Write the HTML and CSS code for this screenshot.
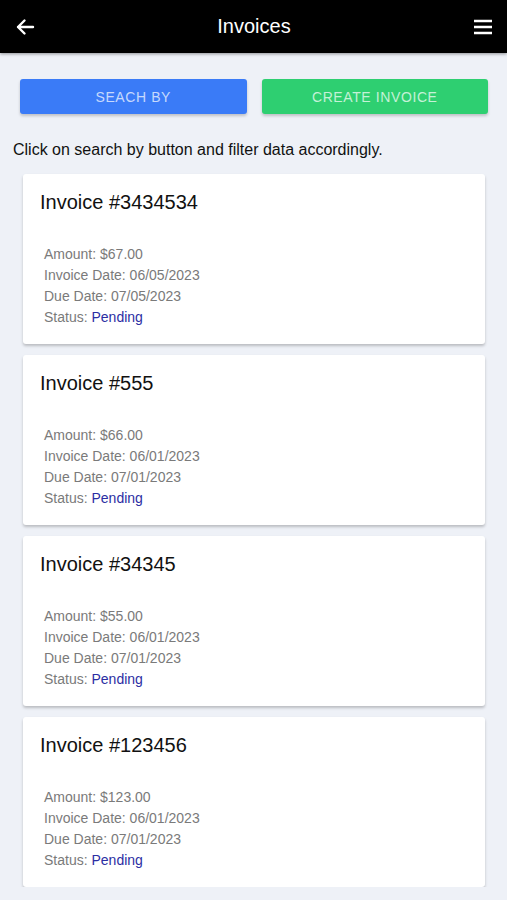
FILE: index.html
```html
<!DOCTYPE html>
<html lang="en">
<head>
<meta charset="utf-8">
<title>Invoices</title>
<link rel="stylesheet" href="styles.css">
</head>
<body>
<header class="topbar">
  <button class="icon-btn" aria-label="Back">
    <svg width="20" height="20" viewBox="0 0 20 20"><path d="M18 10H3M9.5 3.5L3 10l6.5 6.5" fill="none" stroke="#fff" stroke-width="2.4" stroke-linecap="round" stroke-linejoin="round"/></svg>
  </button>
  <h1 class="title">Invoices</h1>
  <button class="icon-btn" aria-label="Menu">
    <svg width="20" height="20" viewBox="0 0 20 20"><path d="M1 4h18M1 10h18M1 16h18" stroke="#fff" stroke-width="2.4"/></svg>
  </button>
</header>
<main class="content">
  <div class="actions">
    <button class="btn btn-blue">SEACH BY</button>
    <button class="btn btn-green">CREATE INVOICE</button>
  </div>
  <p class="hint">Click on search by button and filter data accordingly.</p>
  <div class="list">
    <article class="card">
      <h2 class="card-title">Invoice #3434534</h2>
      <div class="details">
        <div>Amount: $67.00</div>
        <div>Invoice Date: 06/05/2023</div>
        <div>Due Date: 07/05/2023</div>
        <div>Status: <span class="status">Pending</span></div>
      </div>
    </article>
    <article class="card">
      <h2 class="card-title">Invoice #555</h2>
      <div class="details">
        <div>Amount: $66.00</div>
        <div>Invoice Date: 06/01/2023</div>
        <div>Due Date: 07/01/2023</div>
        <div>Status: <span class="status">Pending</span></div>
      </div>
    </article>
    <article class="card">
      <h2 class="card-title">Invoice #34345</h2>
      <div class="details">
        <div>Amount: $55.00</div>
        <div>Invoice Date: 06/01/2023</div>
        <div>Due Date: 07/01/2023</div>
        <div>Status: <span class="status">Pending</span></div>
      </div>
    </article>
    <article class="card">
      <h2 class="card-title">Invoice #123456</h2>
      <div class="details">
        <div>Amount: $123.00</div>
        <div>Invoice Date: 06/01/2023</div>
        <div>Due Date: 07/01/2023</div>
        <div>Status: <span class="status">Pending</span></div>
      </div>
    </article>
  </div>
</main>
</body>
</html>
```

FILE: styles.css
```css
* { box-sizing: border-box; }
html, body {
  margin: 0;
  padding: 0;
  background: #eef1f7;
  font-family: "Liberation Sans", Arial, sans-serif;
  overflow: hidden;
}
.topbar {
  height: 53px;
  background: #000;
  display: flex;
  align-items: center;
  justify-content: space-between;
  padding: 0 14px 0 15px;
  box-shadow: 0 1px 3px rgba(0,0,0,0.4);
}
.icon-btn {
  background: none;
  border: 0;
  padding: 0;
  width: 20px;
  height: 20px;
  display: flex;
}
.title {
  margin: 0;
  color: #fff;
  font-size: 20px;
  font-weight: normal;
}
.content {
  padding: 26px 0 0;
}
.actions {
  display: flex;
  gap: 15px;
  padding: 0 19px 0 20px;
}
.btn {
  flex: 1;
  height: 35px;
  border: 0;
  border-radius: 3px;
  font-family: "Liberation Sans", Arial, sans-serif;
  font-size: 14px;
  letter-spacing: 0.6px;
  color: rgba(255,255,255,0.72);
  box-shadow: 0 2px 3px rgba(0,0,0,0.2);
}
.btn-blue { background: #3a7bf7; }
.btn-green { background: #2ecf71; }
.hint {
  margin: 27px 0 0 13px;
  font-size: 16px;
  color: #111;
  line-height: 18px;
}
.list {
  display: flex;
  flex-direction: column;
  gap: 11px;
  padding: 15px 22px 0 23px;
}
.card {
  background: #fff;
  border-radius: 3px;
  height: 170px;
  padding: 16px 16px 0 17px;
  box-shadow: 0 2px 3px rgba(0,0,0,0.22);
}
.card-title {
  margin: 0;
  font-size: 20px;
  font-weight: normal;
  color: #111;
  line-height: 24px;
}
.details {
  margin-top: 30px;
  padding-left: 4px;
  font-size: 14px;
  line-height: 21px;
  color: #7a7a7a;
}
.status { color: #2b2ea3; }
```
